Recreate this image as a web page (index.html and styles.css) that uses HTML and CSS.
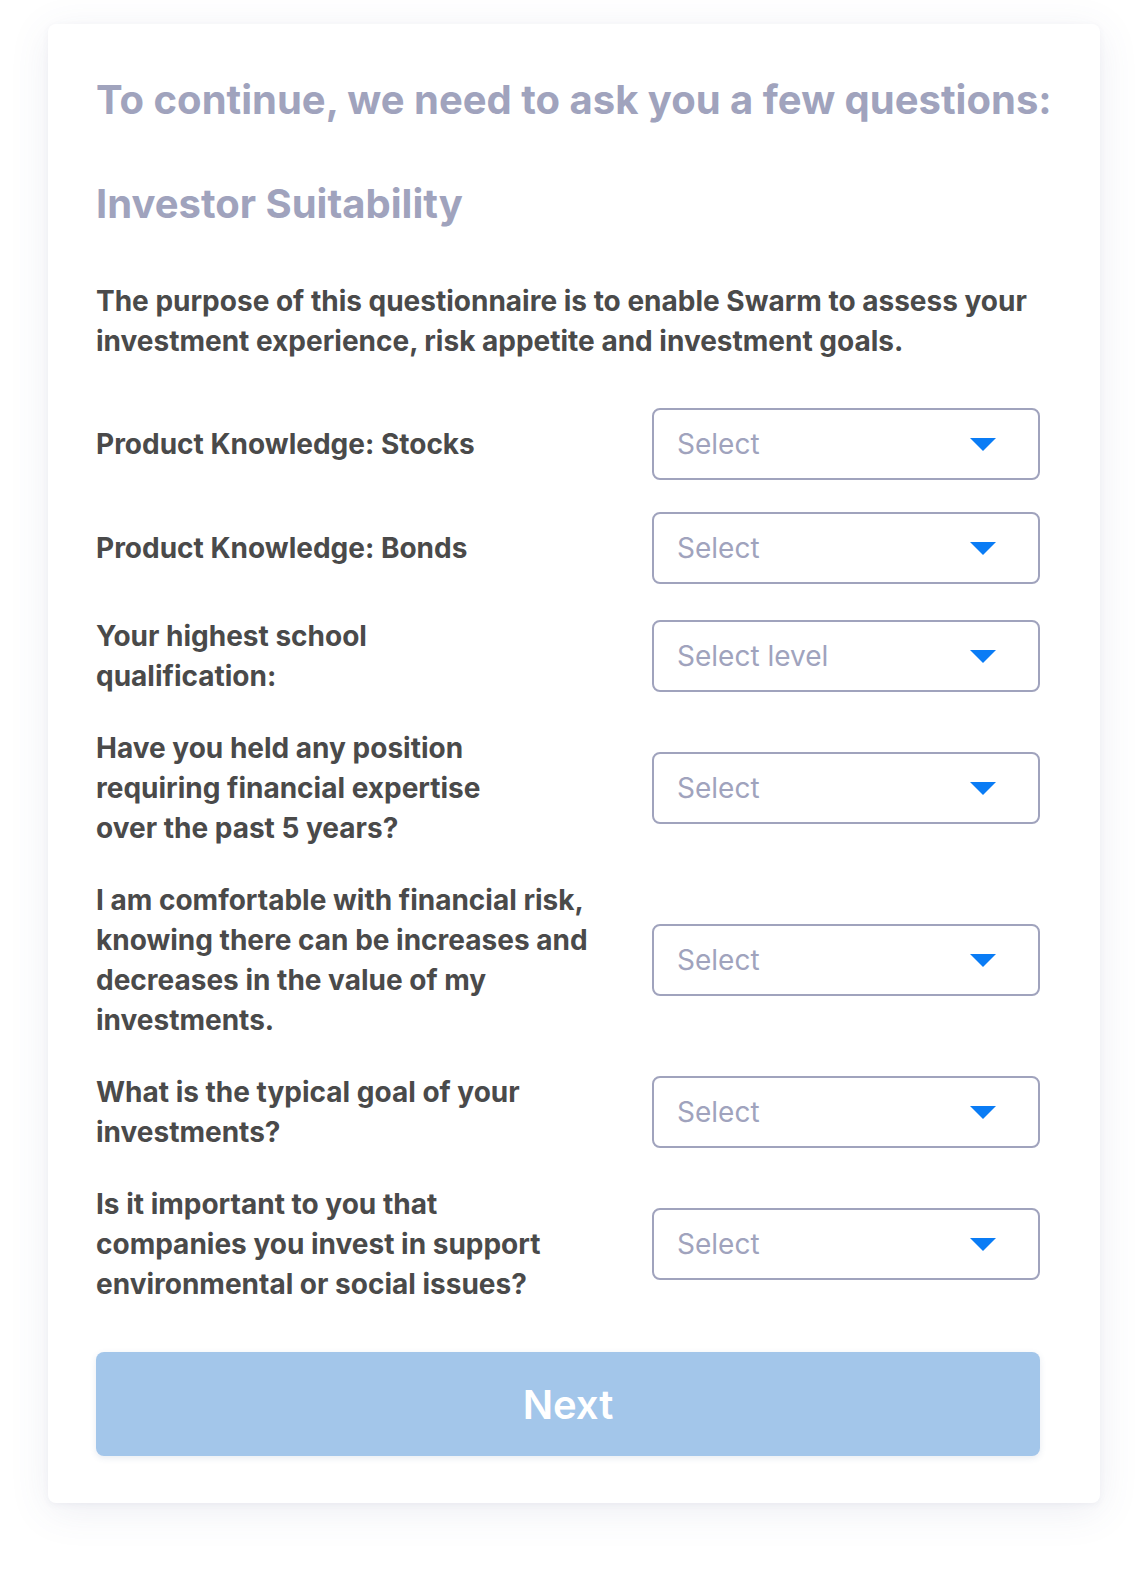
FILE: index.html
```html
<!DOCTYPE html>
<html lang="en">
<head>
<meta charset="utf-8">
<title>Investor Suitability</title>
<link rel="stylesheet" href="styles.css">
</head>
<body>
<main class="card">
  <h1 class="title">To continue, we need to ask you a few questions:</h1>
  <h2 class="subtitle">Investor Suitability</h2>
  <p class="intro">The purpose of this questionnaire is to enable Swarm to assess your investment experience, risk appetite and investment goals.</p>

  <div class="questions">
    <div class="row">
      <div class="label">Product Knowledge: Stocks</div>
      <div class="select"><span class="placeholder">Select</span><span class="caret"></span></div>
    </div>
    <div class="row">
      <div class="label">Product Knowledge: Bonds</div>
      <div class="select"><span class="placeholder">Select</span><span class="caret"></span></div>
    </div>
    <div class="row">
      <div class="label">Your highest school<br>qualification:</div>
      <div class="select"><span class="placeholder">Select level</span><span class="caret"></span></div>
    </div>
    <div class="row">
      <div class="label">Have you held any position<br>requiring financial expertise<br>over the past 5 years?</div>
      <div class="select"><span class="placeholder">Select</span><span class="caret"></span></div>
    </div>
    <div class="row">
      <div class="label">I am comfortable with financial risk,<br>knowing there can be increases and<br>decreases in the value of my<br>investments.</div>
      <div class="select"><span class="placeholder">Select</span><span class="caret"></span></div>
    </div>
    <div class="row">
      <div class="label">What is the typical goal of your<br>investments?</div>
      <div class="select"><span class="placeholder">Select</span><span class="caret"></span></div>
    </div>
    <div class="row">
      <div class="label">Is it important to you that<br>companies you invest in support<br>environmental or social issues?</div>
      <div class="select"><span class="placeholder">Select</span><span class="caret"></span></div>
    </div>
  </div>

  <button class="next" type="button">Next</button>
</main>
</body>
</html>
```

FILE: styles.css
```css
html, body {
  margin: 0;
  padding: 0;
  background: #ffffff;
}

body {
  font-family: Inter, "Noto Sans", sans-serif;
  padding: 24px 48px 73px 48px;
}

.card {
  width: 1052px;
  box-sizing: border-box;
  background: #ffffff;
  border-radius: 8px;
  box-shadow: 0 8px 40px rgba(80, 90, 140, 0.10), 0 2px 6px rgba(80, 90, 140, 0.06);
  padding: 52px 60px 47px 48px;
  display: flex;
  flex-direction: column;
}

.title {
  margin: 0;
  font-family: Inter, sans-serif;
  font-weight: 700;
  font-size: 40px;
  line-height: 48px;
  color: #a0a3bd;
  white-space: nowrap;
}

.subtitle {
  margin: 56px 0 0 0;
  font-family: Inter, sans-serif;
  font-weight: 700;
  font-size: 40px;
  line-height: 48px;
  color: #a0a3bd;
}

.intro {
  margin: 53px 0 0 0;
  font-size: 28px;
  font-weight: 700;
  line-height: 40px;
  color: #4a4a4a;
}

.questions {
  margin-top: 47px;
  display: flex;
  flex-direction: column;
  gap: 32px;
}

.row {
  display: flex;
  align-items: center;
  justify-content: space-between;
}

.label {
  font-size: 28px;
  font-weight: 700;
  line-height: 40px;
  color: #4a4a4a;
}

.select {
  flex: 0 0 auto;
  width: 388px;
  height: 72px;
  box-sizing: border-box;
  border: 2px solid #a0a3bd;
  border-radius: 8px;
  display: flex;
  align-items: center;
  justify-content: space-between;
  padding: 0 42px 0 23px;
}

.placeholder {
  font-size: 28px;
  font-weight: 400;
  color: #a0a3bd;
}

.caret {
  width: 0;
  height: 0;
  border-left: 13px solid transparent;
  border-right: 13px solid transparent;
  border-top: 13px solid #0a7cf5;
}

.next {
  margin-top: 48px;
  height: 104px;
  width: 100%;
  border: none;
  border-radius: 8px;
  background: #a3c6ea;
  box-shadow: 0 2px 6px rgba(60, 90, 140, 0.12);
  color: #ffffff;
  font-family: Inter, sans-serif;
  font-size: 40px;
  font-weight: 600;
  cursor: pointer;
}
```
